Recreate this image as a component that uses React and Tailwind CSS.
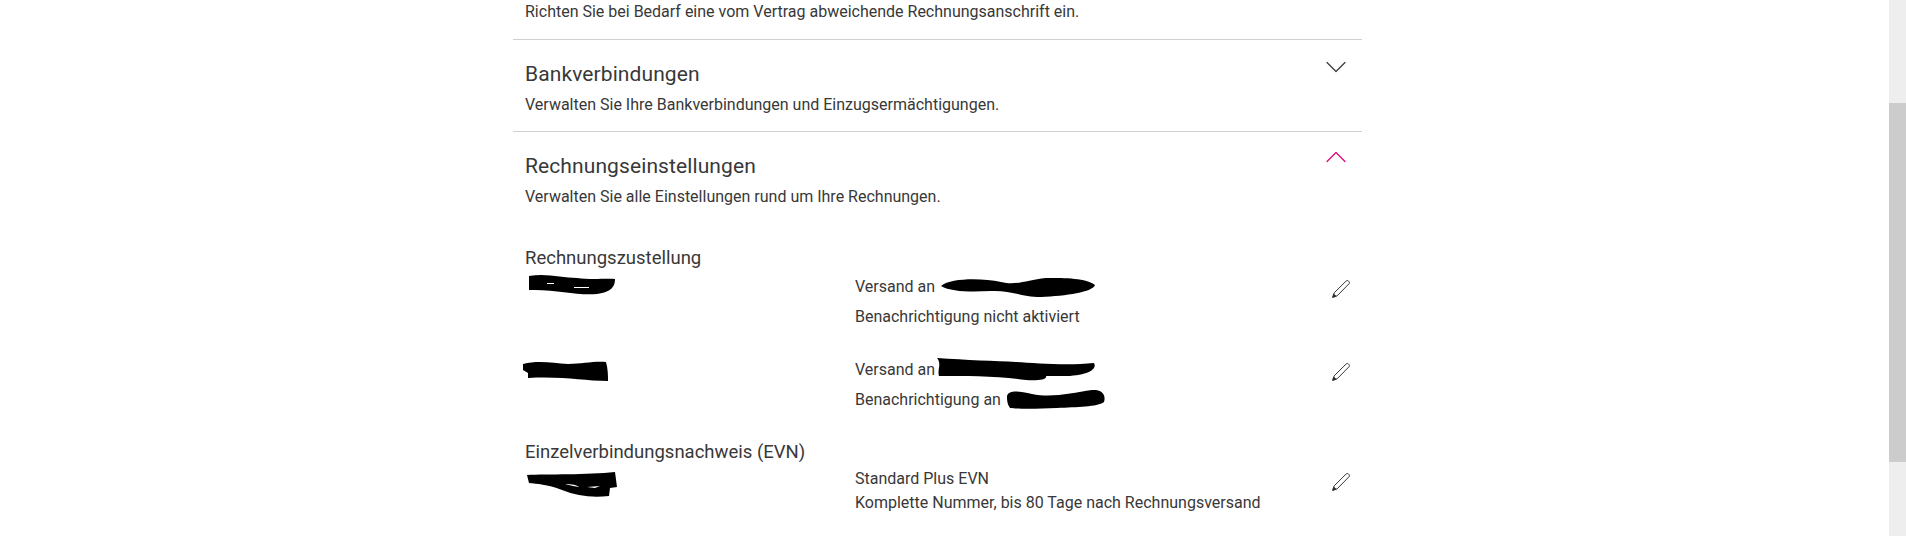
import { ChevronDown, ChevronUp } from "lucide-react";

function Scribble({ d, w, h, className = "" }) {
  return (
    <svg width={w} height={h} viewBox={`0 0 ${w} ${h}`} className={className}>
      <path d={d} fill="#000" fillRule="evenodd" />
    </svg>
  );
}

function Pencil() {
  return (
    <svg width="22" height="22" viewBox="0 0 20 20" fill="none" stroke="#333333" strokeWidth="0.9">
      <path d="M2.5 17.5 L3.8 13.5 L14.8 2.6 Q15.6 1.9 16.6 2.6 L17.4 3.4 Q18 4.3 17.3 5.2 L6.5 16.2 Z" />
      <path d="M2.5 17.5 L3.4 14.6 L5.4 16.6 Z" fill="#262626" />
    </svg>
  );
}

function Section({ title, text, open }) {
  return (
    <div className="flex justify-between border-t border-[#d0d0d0] pl-3 pr-2 h-[92px]">
      <div>
        <h2 className="text-[21px] tracking-[0.1px] leading-7 mt-5 text-[#383838]">{title}</h2>
        <p className="text-[16px] leading-6 mt-[5px] text-[#383838]">{text}</p>
      </div>
      <div className={open ? "mt-[7px]" : "mt-[9px]"}>
        {open ? (
          <ChevronUp size={36} strokeWidth={0.8} color="#e20074" />
        ) : (
          <ChevronDown size={36} strokeWidth={0.8} color="#383838" />
        )}
      </div>
    </div>
  );
}

function Row({ blob, top, lines, className = "" }) {
  return (
    <div className={`grid grid-cols-[330px_1fr_30px] pl-3 ${className}`}>
      <div>{blob}</div>
      <div className="text-[16px] text-[#383838]">{lines}</div>
      <div className={`ml-[-2px] ${top}`}>
        <Pencil />
      </div>
    </div>
  );
}

export default function App() {
  return (
    <div className="flex h-[536px] overflow-hidden bg-white font-['Roboto',sans-serif]">
      <main className="flex-1 flex justify-center">
        <div className="w-[849px] ml-[-14px]">
          <p className="pl-3 text-[16px] leading-6 text-[#383838] h-[39px]">
            Richten Sie bei Bedarf eine vom Vertrag abweichende Rechnungsanschrift ein.
          </p>
          <Section title="Bankverbindungen" text="Verwalten Sie Ihre Bankverbindungen und Einzugsermächtigungen." />
          <Section title="Rechnungseinstellungen" text="Verwalten Sie alle Einstellungen rund um Ihre Rechnungen." open />

          <h3 className="pl-3 mt-[23px] text-[18.5px] leading-6 text-[#383838]">Rechnungszustellung</h3>
          <Row
            className="mt-[5px]"
            top="mt-[3px]"
            blob={<Scribble w={88} h={21} className="mt-[-1px] ml-[2px]" d="M2 2 C20 -1 35 4 50 4 C65 6 80 4 88 5 C88 12 85 18 70 20 C50 22 30 15 2 16 Z M20 9 L27 9 L27 10 L20 10 Z M47 13 L62 13 L62 14 L47 14 Z" />}
            lines={
              <>
                <p className="leading-6 flex items-center h-6">
                  Versand an
                  <Scribble w={154} h={19} className="ml-[6px] mt-[1px]" d="M0 8 C10 0 40 0 60 4 C75 8 85 2 105 0 C125 0 145 0 154 7 C152 14 125 18 100 19 C80 19 70 12 50 13 C30 14 10 14 0 8 Z" />
                </p>
                <p className="leading-6 mt-[6px]">Benachrichtigung nicht aktiviert</p>
              </>
            }
          />
          <Row
            className="mt-[29px]"
            top="mt-[3px]"
            blob={<Scribble w={85} h={20} className="mt-[3px] ml-[-2px]" d="M0 3 C15 -1 30 2 45 3 C60 3 70 0 83 1 C85 8 85 15 85 20 C60 20 40 15 5 17 L5 12 L0 9 Z" />}
            lines={
              <>
                <p className="leading-6 flex items-center h-6">
                  Versand an
                  <Scribble w={159} h={23} className="ml-[1px] mt-[-2px]" d="M1 0 C30 2 60 3 80 4 C100 5 130 8 158 5 C161 10 155 17 130 18 L110 18 C112 22 100 23 90 22 C65 18 30 18 3 18 C1 12 6 6 1 0 Z" />
                </p>
                <p className="leading-6 mt-[6px] flex items-center h-6">
                  Benachrichtigung an
                  <Scribble w={98} h={19} className="ml-[6px] mt-[-2px]" d="M0 6 C2 0 12 1 25 4 C45 8 65 3 85 0 C96 -1 99 6 97 12 C90 17 70 17 50 18 C30 19 10 19 3 18 C0 14 0 10 0 6 Z" />
                </p>
              </>
            }
          />
          <h3 className="pl-3 mt-[28px] text-[18.5px] leading-6 text-[#383838]">Einzelverbindungsnachweis (EVN)</h3>
          <Row
            className="mt-[5px]"
            top="mt-[2px]"
            blob={<Scribble w={90} h={25} className="mt-[3px] ml-[2px]" d="M0 3 C20 2 60 3 88 0 L90 15 L83 16 L82 24 C65 26 50 24 35 18 C20 12 10 12 2 11 Z M38 12 C45 12 50 13 52 15 L46 14 Z M60 15 L73 14 L68 16 Z" />}
            lines={
              <>
                <p className="leading-6 mt-[-2px]">Standard Plus EVN</p>
                <p className="leading-6">Komplette Nummer, bis 80 Tage nach Rechnungsversand</p>
              </>
            }
          />
        </div>
      </main>
      <div className="w-[17px] bg-[#eeeeee]">
        <div className="h-[359px] mt-[103px] bg-[#cccccc]" />
      </div>
    </div>
  );
}
